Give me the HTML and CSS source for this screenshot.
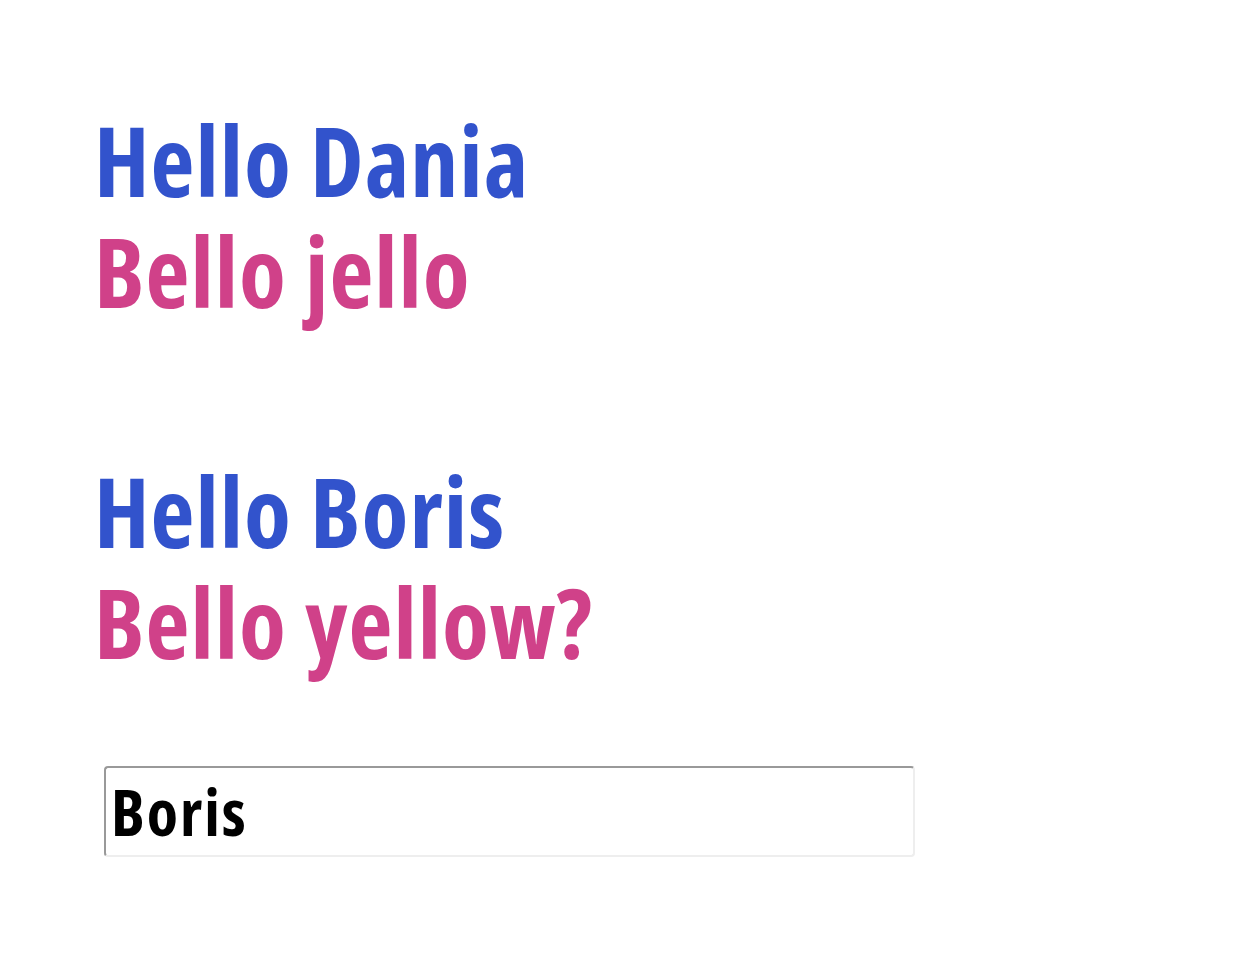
FILE: index.html
```html
<!DOCTYPE html>
<html>
<head>
<meta charset="utf-8">
<link rel="stylesheet" href="styles.css">
</head>
<body>
<main class="page">
  <section class="greeting">
    <div class="hello">Hello Dania</div>
    <div class="bello">Bello jello</div>
  </section>
  <section class="greeting">
    <div class="hello">Hello Boris</div>
    <div class="bello">Bello yellow?</div>
  </section>
  <input class="name-input" type="text" value="Boris">
</main>
</body>
</html>
```
FILE: styles.css
```css
html, body {
  margin: 0;
  padding: 0;
  background: #ffffff;
}
.page {
  display: flex;
  flex-direction: column;
  align-items: flex-start;
  padding: 104px 0 0 94px;
  font-family: "Open Sans", sans-serif;
  font-weight: 700;
  font-stretch: 82%;
}
.greeting {
  display: flex;
  flex-direction: column;
  margin-bottom: 129px;
}
.hello, .bello {
  font-size: 96px;
  line-height: 111px;
  white-space: nowrap;
  letter-spacing: 1px;
}
.hello {
  color: #3253cc;
}
.bello {
  color: #d04189;
}
.name-input {
  margin: -40px 0 0 10px;
  box-sizing: border-box;
  width: 811px;
  height: 91px;
  padding: 0 5px;
  border-style: solid;
  border-width: 2px;
  border-color: #999999 #eeeeee #eeeeee #999999;
  border-radius: 4px;
  font-family: "Open Sans", sans-serif;
  font-weight: 700;
  font-stretch: 82%;
  font-size: 64px;
  letter-spacing: 2px;
  color: #000000;
  background: #ffffff;
  outline: none;
}
```
